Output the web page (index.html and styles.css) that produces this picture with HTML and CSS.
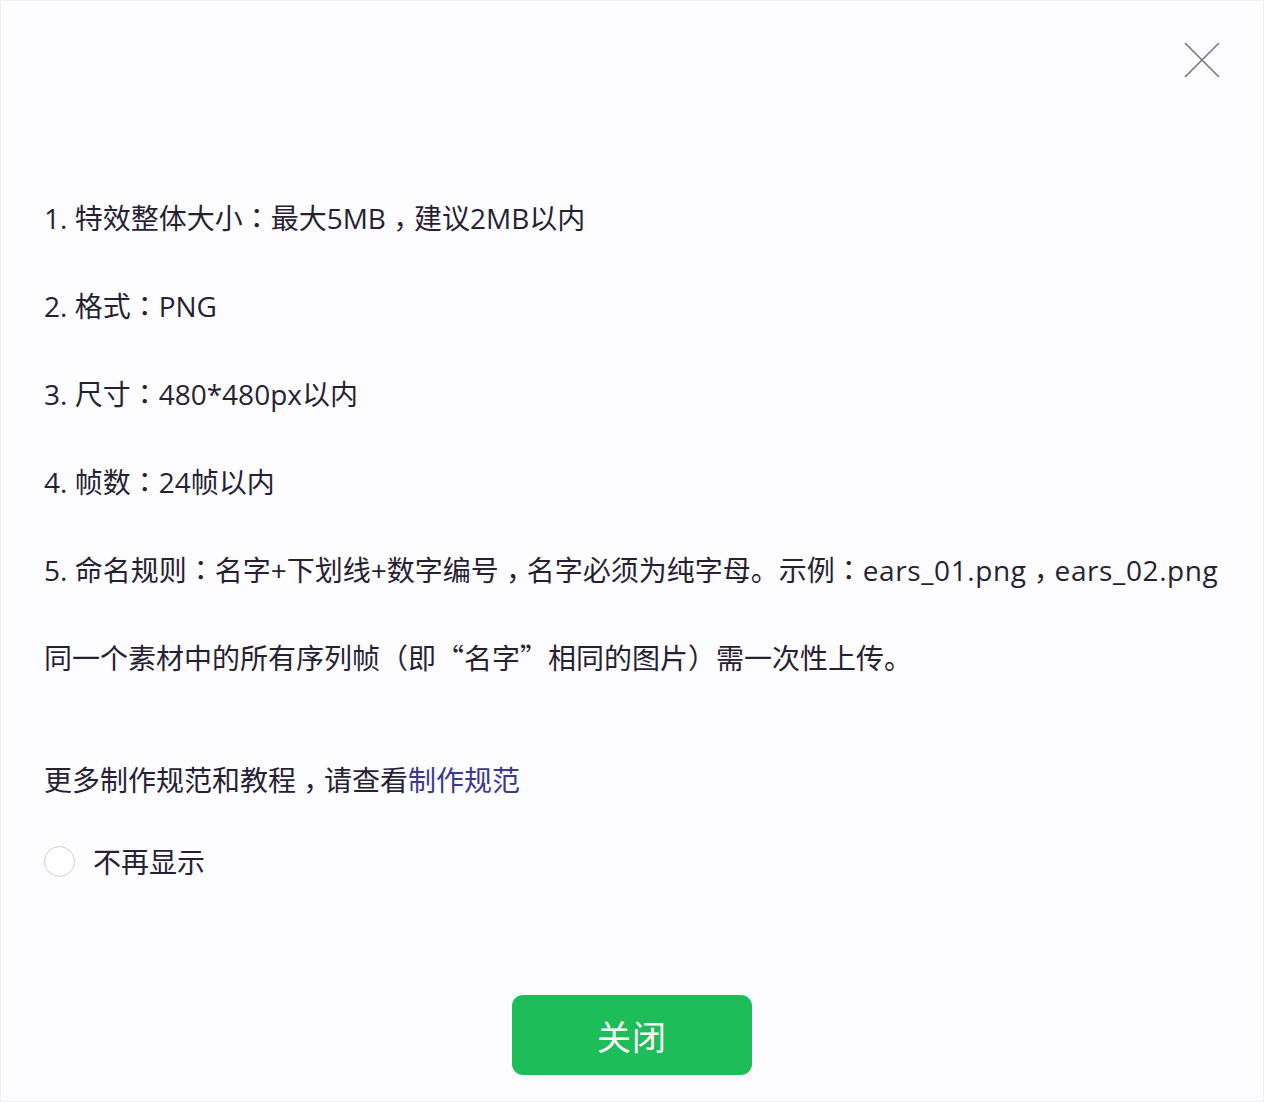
FILE: index.html
```html
<!DOCTYPE html>
<html lang="zh-CN">
<head>
<meta charset="utf-8">
<title>上传规范</title>
<link rel="stylesheet" href="styles.css">
</head>
<body>
<div class="dialog">
  <div class="header">
    <button class="close" aria-label="关闭">
      <svg width="36" height="36" viewBox="0 0 36 36"><path d="M1 1 L35 35 M35 1 L1 35" stroke="#7a7680" stroke-width="1.6" fill="none"/></svg>
    </button>
  </div>
  <div class="rules">
    <p class="line">1. 特效整体大小<span class="co" lang="zh-TW">：</span>最大5MB<span class="cm" lang="zh-TW">，</span>建议2MB以内</p>
    <p class="line">2. 格式<span class="co" lang="zh-TW">：</span>PNG</p>
    <p class="line">3. 尺寸<span class="co" lang="zh-TW">：</span>480*480px以内</p>
    <p class="line">4. 帧数<span class="co" lang="zh-TW">：</span>24帧以内</p>
    <p class="line">5. 命名规则<span class="co" lang="zh-TW">：</span>名字+下划线+数字编号<span class="cm" lang="zh-TW">，</span>名字必须为纯字母。示例<span class="co" lang="zh-TW">：</span><span class="latin">ears_01.png</span><span class="cm" lang="zh-TW">，</span><span class="latin">ears_02.png</span></p>
    <p class="line">同一个素材中的所有序列帧（即<span class="q">“名字”</span>相同的图片）需一次性上传。</p>
  </div>
  <p class="line more">更多制作规范和教程<span class="cm" lang="zh-TW">，</span>请查看<a class="link" href="#">制作规范</a></p>
  <label class="check">
    <span class="radio"></span>
    <span class="check-text">不再显示</span>
  </label>
  <div class="footer">
    <button class="btn">关闭</button>
  </div>
</div>
</body>
</html>
```
FILE: styles.css
```css
* { box-sizing: border-box; }
html, body {
  margin: 0;
  padding: 0;
  background: #fdfdff;
}
body {
  font-family: "Open Sans", "Noto Sans CJK SC", sans-serif;
  color: #281f33;
  text-spacing-trim: space-all;
}
.dialog {
  width: 1264px;
  height: 1102px;
  border: 1px solid #f0f0f4;
  display: flex;
  flex-direction: column;
  padding: 0 0 0 43px;
}
.header {
  height: 172px;
  display: flex;
  justify-content: flex-end;
  align-items: flex-start;
  padding: 41px 43px 0 0;
}
.close {
  width: 36px;
  height: 36px;
  padding: 0;
  border: 0;
  background: none;
  cursor: pointer;
}
.close svg { display: block; }
.rules {
  display: flex;
  flex-direction: column;
}
.line {
  margin: 0;
  font-size: 28px;
  line-height: 88px;
  height: 88px;
  white-space: nowrap;
}
.co {
  font-family: "Noto Sans CJK TC", sans-serif;
}
.cm {
  font-family: "Noto Sans CJK TC", sans-serif;
  vertical-align: -0.28em;
}
.q {
  font-family: "Noto Sans CJK SC", sans-serif;
}
.latin {
  letter-spacing: 0.6px;
}
.more {
  margin-top: 35px;
}
.link {
  color: #3b3a8c;
  text-decoration: none;
}
.check {
  display: flex;
  align-items: center;
  gap: 18px;
  height: 72px;
  margin-top: 1px;
}
.radio {
  width: 31px;
  height: 31px;
  border: 1px solid #cfcfd6;
  border-radius: 50%;
  background: #fff;
  flex: none;
}
.check-text {
  font-size: 28px;
}
.footer {
  display: flex;
  justify-content: center;
  margin-top: auto;
  padding: 0 43px 26px 0;
}
.btn {
  width: 240px;
  height: 80px;
  border: 0;
  border-radius: 11px;
  background: #1dbe5a;
  color: #fff;
  font-family: "Noto Sans CJK SC", sans-serif;
  font-size: 34px;
  letter-spacing: 1px;
  cursor: pointer;
}
```
